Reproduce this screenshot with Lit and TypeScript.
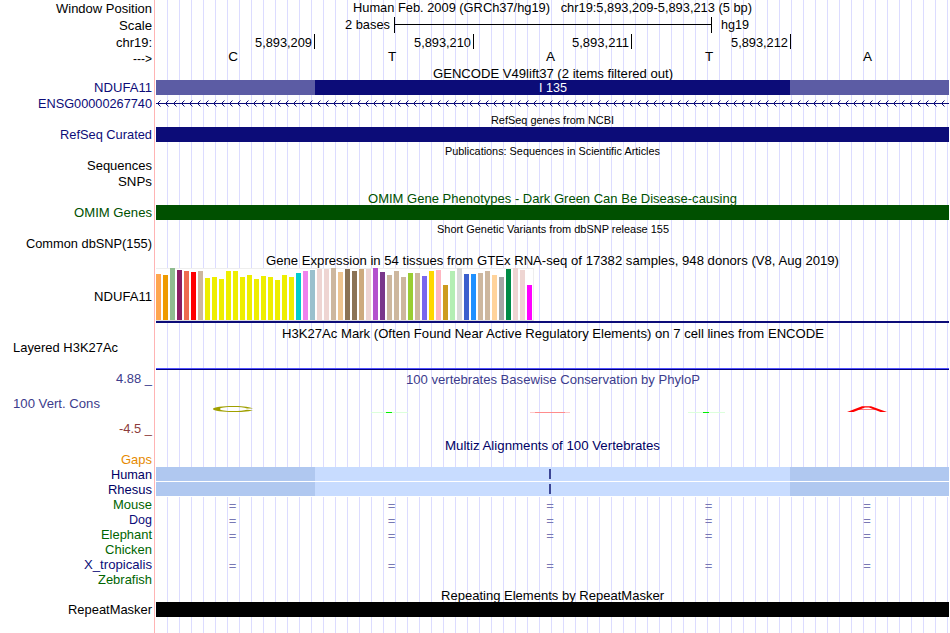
import { LitElement, html, svg, css, nothing, TemplateResult } from 'lit';
import { customElement, property } from 'lit/decorators.js';
import { styleMap } from 'lit/directives/style-map.js';

type Bar = [color: string, height: number];
type Track = TemplateResult | typeof nothing;

const TISSUES: Bar[] = [
  ['#ffa54f', 46], ['#ee9a00', 45], ['#8fbc8f', 52], ['#8b1c62', 50], ['#ee6a50', 49], ['#ff0000', 48],
  ['#cdb79e', 49], ['#eeee00', 42], ['#eeee00', 43], ['#eeee00', 41], ['#eeee00', 49], ['#eeee00', 49],
  ['#eeee00', 43], ['#eeee00', 45], ['#eeee00', 41], ['#eeee00', 44], ['#eeee00', 43], ['#eeee00', 40],
  ['#eeee00', 45], ['#eeee00', 43], ['#00cdcd', 47], ['#ee82ee', 49], ['#9ac0cd', 50], ['#eed5d2', 51],
  ['#eed5d2', 51], ['#cdb79e', 52], ['#eec591', 48], ['#8b7355', 51], ['#8b7355', 49], ['#cdaa7d', 51],
  ['#eed5d2', 51], ['#b452cd', 52], ['#7a378b', 48], ['#cdb79e', 45], ['#cdb79e', 49], ['#cdb79e', 43],
  ['#9acd32', 47], ['#cdb79e', 47], ['#7a67ee', 44], ['#ffd700', 49], ['#ffb6c1', 50], ['#cd9b1d', 35],
  ['#b4eeb4', 49], ['#d9d9d9', 52], ['#3a5fcd', 46], ['#1e90ff', 46], ['#cdb79e', 47], ['#cdb79e', 49],
  ['#ffd39b', 45], ['#a6a6a6', 43], ['#008b45', 51], ['#eed5d2', 52], ['#eed5d2', 50], ['#ff00ff', 35],
];

const BASES = ['C', 'T', 'A', 'T', 'A'];
const POSITIONS = ['5,893,209', '5,893,210', '5,893,211', '5,893,212'];

const SPECIES: { name: string; width: number; tone: string; aligned: boolean }[] = [
  { name: 'Mouse', width: 39, tone: 'green', aligned: true },
  { name: 'Dog', width: 23, tone: 'navy', aligned: true },
  { name: 'Elephant', width: 51, tone: 'green', aligned: true },
  { name: 'Chicken', width: 47, tone: 'green', aligned: false },
  { name: 'X_tropicalis', width: 68, tone: 'navy', aligned: true },
  { name: 'Zebrafish', width: 54, tone: 'green', aligned: false },
];

const tones = css`
  .navy { color: #0c0c78; }
  .dark-navy { color: #000064; }
  .blue { color: #3c3c8c; }
  .green { color: #006400; }
  .dark-green { color: #005000; }
  .orange { color: #e68a00; }
  .red { color: #8c3c3c; }

  svg {
    display: block;
    flex: none;
    overflow: visible;
  }

  .fit {
    fill: currentColor;
    white-space: pre;
  }
`;

/** Text set to a fixed width, with its baseline counted from the top of the row */
const fitText = (text: string, width: number, baseline = 12) => html`
  <svg class="fit" width=${width} height="14">
    <text x="0" y=${baseline} textLength=${width} lengthAdjust="spacingAndGlyphs">${text}</text>
  </svg>
`;

/**
 * One line of the browser: a right-aligned label and the track beside it.
 *
 * @element track-row
 * @attr {string} label - Text in the label column
 * @attr {string} tone - Label color
 * @attr {boolean} start - Align the label to the left
 *
 * @slot - Track content
 */
@customElement('track-row')
export class TrackRow extends LitElement {
  static override styles = [
    tones,
    css`
      :host {
        display: block;
        flex: none;
      }

      .row {
        display: grid;
        grid-template-columns: 152px 793px;
        column-gap: 4px;
      }

      .label {
        display: flex;
        justify-content: flex-end;
        align-items: flex-start;
        min-height: 0;
      }

      :host([start]) .label {
        justify-content: flex-start;
        padding-left: 13px;
      }

      .track {
        display: flex;
        align-items: flex-start;
        min-width: 0;
        min-height: 0;
      }
    `,
  ];

  @property({ type: String }) label = '';
  @property({ type: String }) tone = 'black';
  @property({ type: Number }) labelWidth = 0;
  @property({ type: Number }) height = 15;
  @property({ type: Number }) baseline = 12;
  @property({ type: Boolean, reflect: true }) start = false;

  override render() {
    return html`
      <div class="row" style=${styleMap({ height: `${this.height}px` })}>
        <div class="label ${this.tone}">${fitText(this.label, this.labelWidth, this.baseline)}</div>
        <div class="track"><slot></slot></div>
      </div>
    `;
  }
}

@customElement('app-root')
export class AppRoot extends LitElement {
  static override styles = [
    tones,
    css`
      :host {
        display: block;
        width: 950px;
        height: 633px;
        overflow: hidden;
        background: #fff;
        color: #000;
        font: 13.5px/15px 'Liberation Sans', Arial, sans-serif;
      }

      .browser {
        display: flex;
        flex-direction: column;
        width: 949px;
        height: 633px;
        background:
          linear-gradient(#ffb4b4, #ffb4b4) 154px 0 / 1px 100% no-repeat,
          repeating-linear-gradient(90deg, transparent 0 11px, #dcdcff 11px 12px) 156px 0 / 793px 100% no-repeat;
      }

      .browser > * {
        flex: none;
      }

      .title {
        display: flex;
        justify-content: center;
        align-items: flex-start;
        width: 793px;
      }

      .browser > .title {
        margin-left: 156px;
      }

      .small {
        font-size: 11px;
      }

      .scale {
        display: grid;
        grid-template-columns: 189px 46px 3px 318px 9px 28px;
      }

      .ruler {
        grid-column: 4;
        box-sizing: border-box;
        height: 16px;
        padding-top: 7px;
        border: solid #000;
        border-width: 0 1px;
      }

      .ruler hr {
        height: 1px;
        margin: 0;
        border: 0;
        background: #000;
      }

      .scale > :first-child { grid-column: 2; }
      .scale > :last-child { grid-column: 6; }

      .cells {
        display: grid;
        grid-template-columns: 159px 159px 158px 159px 158px;
        width: 793px;
      }

      .base {
        padding-right: 5px;
        text-align: center;
        line-height: 13px;
      }

      .position {
        display: flex;
        justify-content: flex-end;
        box-sizing: border-box;
        height: 15px;
        padding-right: 2px;
        border-right: 1px solid #000;
      }

      .same {
        height: 15px;
        padding-right: 6px;
        color: #7878b4;
        font-size: 13px;
        line-height: 18px;
        text-align: center;
      }

      .solid {
        width: 793px;
        height: 15px;
        background: #0c0c78;
      }

      .solid.omim { background: #005000; }
      .solid.repeat { background: #000; }

      .exon,
      .align {
        display: grid;
        grid-template-columns: 159px 475px 159px;
        width: 793px;
      }

      .exon {
        height: 15px;
        color: #fff;
        background: #0c0c78;
      }

      .exon > div {
        display: flex;
        justify-content: center;
      }

      .exon > b { background: #5c5ca4; }

      .align {
        height: 14px;
        border-bottom: 1px solid #fff;
        background: #c8dcff;
      }

      .align > b { background: #b0c8f0; }

      .align i {
        justify-self: center;
        align-self: center;
        width: 2px;
        height: 10px;
        margin-right: 6px;
        background: #3c4696;
      }

      .expression {
        display: flex;
        align-items: flex-end;
        gap: 2px;
        box-sizing: border-box;
        width: 378px;
        height: 53px;
        background: #fff;
        border: solid #eee;
        border-width: 1px 1px 1px 0;
        border-bottom-color: #ddd;
      }

      .expression i {
        flex: none;
        width: 5px;
      }

      .baseline {
        height: 2px;
        margin-left: 156px;
        background: #0c0c78;
      }

      .signal {
        height: 1px;
        margin: 13px 0 0 156px;
        border-top: 1px solid #5050ff;
        background: #00007c;
      }
    `,
  ];

  private _title(text: string, width: number, height: number, baseline: number, cls = '') {
    return html`<div class="title ${cls}" style=${styleMap({ height: `${height}px` })}>
      ${fitText(text, width, baseline)}
    </div>`;
  }

  private _row(label: string, width: number, height: number, baseline: number, track: Track = nothing, tone = 'black') {
    return html`<track-row
      label=${label}
      tone=${tone}
      .labelWidth=${width}
      .height=${height}
      .baseline=${baseline}
    >${track}</track-row>`;
  }

  private _scale() {
    return html`<div class="scale">
      ${fitText('2 bases', 45)}
      <div class="ruler"><hr /></div>
      ${fitText('hg19', 28)}
    </div>`;
  }

  private _positions() {
    return html`<div class="cells">
      ${POSITIONS.map((p) => html`<div class="position">${fitText(p, 57, 13)}</div>`)}
    </div>`;
  }

  private _bases() {
    return html`<div class="cells">${BASES.map((b) => html`<span class="base">${b}</span>`)}</div>`;
  }

  private _same() {
    return html`<div class="cells">${BASES.map(() => html`<span class="same">=</span>`)}</div>`;
  }

  private _strand() {
    const arrows = Array.from({ length: 99 }, (_, i) => `M${i * 8 + 4.5} 5.5l-3 3l3 3`);
    return html`<svg width="793" height="16" fill="none" stroke="#0c0c78">
      <path d="M0 8.5H793" />
      <path d=${arrows.join('')} />
    </svg>`;
  }

  private _expression() {
    return html`<div class="expression">
      ${TISSUES.map(([color, h]) => html`<i style=${styleMap({ background: color, height: `${h}px` })}></i>`)}
    </div>`;
  }

  private _conservation() {
    const weak = (x: number) => svg`
      <path d="M${x} 24.5h37" stroke="#dcffdc" />
      <path d="M${x + 15} 24.5h6" stroke="#00f000" />`;
    return html`<svg width="793" height="32">
      <path
        d="M97 20.4C92 18.6 84 18 77 18C67 18 57 19 57 21C57 23 67 24 77 24C84 24 92 23.8 97 22.2L91 21.8C88 22.8 83 23 77 23C70 23 64 22.4 64 21C64 19.6 70 19 77 19C83 19 88 19.4 91 20.6Z"
        fill="#a0a000"
      />
      ${weak(215)} ${weak(532)}
      <path d="M374 24.5h40" stroke="#ffc8c8" />
      <path d="M379 24.5h30" stroke="#ff8c8c" />
      <path d="M701 21.5h19" stroke="#ff7878" />
      <path d="M691 24L706 18.2H715L731 24H724.5L713 19.6H709L697.5 24Z" fill="#ff0000" />
    </svg>`;
  }

  override render() {
    const align = html`<div class="align"><b></b><i></i><b></b></div>`;
    return html`
      <div class="browser">
        ${this._row('Window Position', 96, 17, 13, this._title('Human Feb. 2009 (GRCh37/hg19)\u00a0\u00a0 chr19:5,893,209-5,893,213 (5 bp)', 399, 15, 12))}
        ${this._row('Scale', 33, 17, 13, this._scale())}
        ${this._row('chr19:', 36, 16, 13, this._positions())}
        ${this._row('--->', 19, 16, 13, this._bases())}
        ${this._title('GENCODE V49lift37 (2 items filtered out)', 240, 14, 12)}
        ${this._row('NDUFA11', 58, 15, 12, html`<div class="exon"><b></b><div>${fitText('I 135', 28)}</div><b></b></div>`, 'navy')}
        ${this._row('ENSG00000267740', 114, 16, 13, this._strand(), 'navy')}
        ${this._title('RefSeq genes from NCBI', 123, 16, 13, 'small')}
        ${this._row('RefSeq Curated', 92, 15, 12, html`<div class="solid"></div>`, 'navy')}
        ${this._title('Publications: Sequences in Scientific Articles', 215, 16, 13, 'small')}
        ${this._row('Sequences', 65, 15, 12)}
        ${this._row('SNPs', 34, 16, 13)}
        ${this._title('OMIM Gene Phenotypes - Dark Green Can Be Disease-causing', 369, 16, 14, 'dark-green')}
        ${this._row('OMIM Genes', 78, 15, 12, html`<div class="solid omim"></div>`, 'dark-green')}
        ${this._title('Short Genetic Variants from dbSNP release 155', 232, 16, 13, 'small')}
        ${this._row('Common dbSNP(155)', 126, 15, 12)}
        ${this._title('Gene Expression in 54 tissues from GTEx RNA-seq of 17382 samples, 948 donors (V8, Aug 2019)', 573, 17, 14)}
        ${this._row('NDUFA11', 58, 53, 33, this._expression())}
        <div class="baseline"></div>
        ${this._title('H3K27Ac Mark (Often Found Near Active Regulatory Elements) on 7 cell lines from ENCODE', 542, 17, 15)}
        <track-row label="Layered H3K27Ac" start .labelWidth=${105}></track-row>
        <div class="signal"></div>
        ${this._row('4.88 _', 36, 18, 13, this._title('100 vertebrates Basewise Conservation by PhyloP', 294, 18, 14, 'blue'), 'blue')}
        <track-row
          label="100 Vert. Cons"
          tone="blue"
          start
          .labelWidth=${87}
          .height=${32}
          .baseline=${20}
        >${this._conservation()}</track-row>
        ${this._row('-4.5 _', 33, 18, 13, nothing, 'red')}
        ${this._title('Multiz Alignments of 100 Vertebrates', 215, 15, 12, 'dark-navy')}
        ${this._row('Gaps', 31, 14, 11, nothing, 'orange')}
        ${this._row('Human', 41, 15, 12, align, 'dark-navy')}
        ${this._row('Rhesus', 44, 15, 12, align, 'dark-navy')}
        ${SPECIES.map((s) => this._row(s.name, s.width, 15, 12, s.aligned ? this._same() : nothing, s.tone))}
        ${this._title('Repeating Elements by RepeatMasker', 223, 15, 13)}
        ${this._row('RepeatMasker', 84, 15, 12, html`<div class="solid repeat"></div>`)}
      </div>
    `;
  }
}

declare global {
  interface HTMLElementTagNameMap {
    'app-root': AppRoot;
    'track-row': TrackRow;
  }
}
